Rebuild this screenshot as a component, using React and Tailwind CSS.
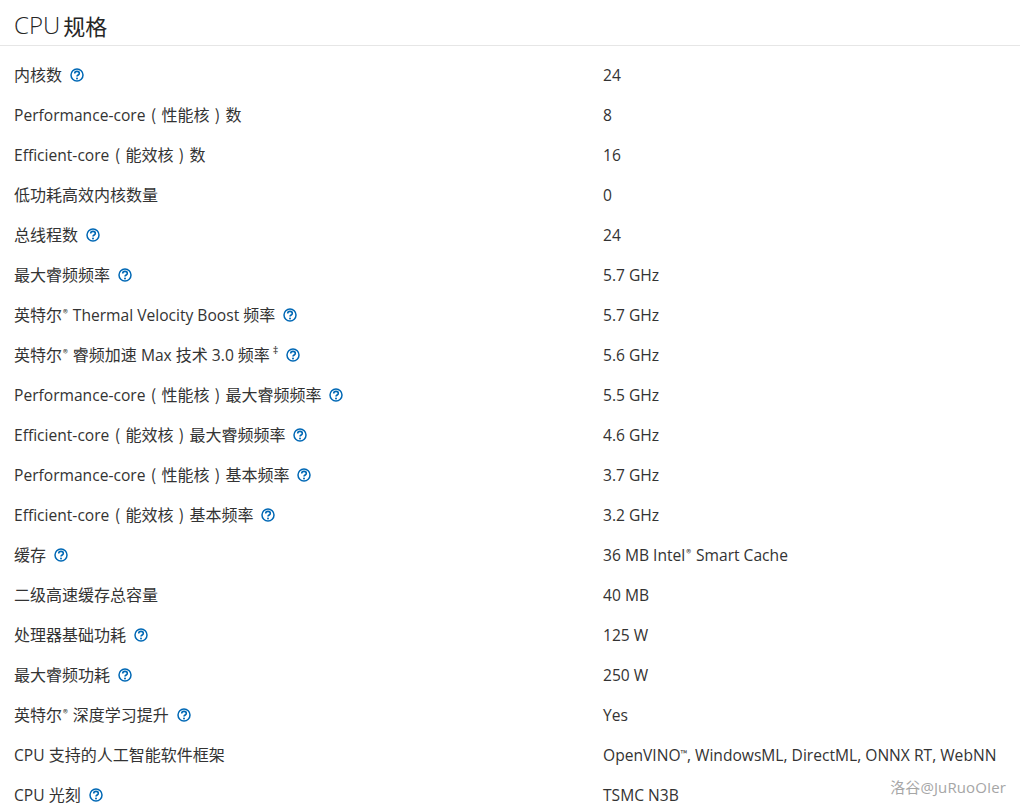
const ROWS = [
  { label: "内核数", value: "24", help: true },
  { label: "Performance-core（性能核）数", value: "8" },
  { label: "Efficient-core（能效核）数", value: "16" },
  { label: "低功耗高效内核数量", value: "0" },
  { label: "总线程数", value: "24", help: true },
  { label: "最大睿频频率", value: "5.7 GHz", help: true },
  { label: "英特尔® Thermal Velocity Boost 频率", value: "5.7 GHz", help: true },
  { label: "英特尔® 睿频加速 Max 技术 3.0 频率", value: "5.6 GHz", help: true, dagger: true },
  { label: "Performance-core（性能核）最大睿频频率", value: "5.5 GHz", help: true },
  { label: "Efficient-core（能效核）最大睿频频率", value: "4.6 GHz", help: true },
  { label: "Performance-core（性能核）基本频率", value: "3.7 GHz", help: true },
  { label: "Efficient-core（能效核）基本频率", value: "3.2 GHz", help: true },
  { label: "缓存", value: "36 MB Intel® Smart Cache", help: true },
  { label: "二级高速缓存总容量", value: "40 MB" },
  { label: "处理器基础功耗", value: "125 W", help: true },
  { label: "最大睿频功耗", value: "250 W", help: true },
  { label: "英特尔® 深度学习提升", value: "Yes", help: true },
  { label: "CPU 支持的人工智能软件框架", value: "OpenVINO™, WindowsML, DirectML, ONNX RT, WebNN" },
  { label: "CPU 光刻", value: "TSMC N3B", help: true },
]

// latin runs are a touch smaller than the CJK, parens sit centred in a full-width box
function Rich({ text }) {
  return text.split(/([\u4e00-\u9fff]+|[（）®™])/).map((part, i) => {
    if (!part) return null
    if (part === "（") return <span key={i} className="inline-block w-4 text-center leading-none">(</span>
    if (part === "）") return <span key={i} className="inline-block w-4 text-center leading-none">)</span>
    if (part === "®") {
      return <span key={i} className="relative top-[-4px] mx-[1px] text-[10px] leading-none">{part}</span>
    }
    if (part === "™") {
      return <span key={i} className="relative top-[-4px] text-[9px] leading-none">{part}</span>
    }
    if (/[\u4e00-\u9fff]/.test(part)) return part
    return <span key={i} className="font-['Open_Sans'] text-[15.6px] leading-none">{part}</span>
  })
}

function HelpIcon() {
  return (
    <svg width="14" height="14" viewBox="0 0 14 14" fill="none" className="ml-2 mt-[2px] shrink-0">
      <circle cx="7" cy="7" r="6" stroke="#0068b5" strokeWidth="1.5" />
      <path d="M4.7 5.6c0-1.4 1.1-2.2 2.3-2.2s2.3.8 2.3 2c0 1.6-2.3 1.6-2.3 3.2" stroke="#0068b5" strokeWidth="1.6" />
      <circle cx="7" cy="10.5" r="1" fill="#0068b5" />
    </svg>
  )
}

export default function App() {
  return (
    <div className="relative h-[811px] w-[1020px] overflow-hidden bg-white font-['Noto_Sans_CJK_SC',sans-serif] text-[#333333]">
      <div className="flex h-[46px] items-start border-b border-[#e6e6e6] pl-[14px] pt-[7px] text-[22px] leading-[36px] text-[#262626]">
        <span className="font-['Open_Sans'] text-[24px] font-light">CPU</span>
        <span className="ml-[3px]">规格</span>
      </div>
      <div className="pt-[8px]">
        {ROWS.map((r) => (
          <div key={r.label} className="flex h-10 items-center pl-[14px] text-[16px] leading-6">
            <div className="flex w-[589px] items-center">
              <span><Rich text={r.label} /></span>
              {r.dagger && <span className="relative top-[-4px] ml-[3px] font-['Open_Sans'] text-[11px]">‡</span>}
              {r.help && <HelpIcon />}
            </div>
            <div><Rich text={r.value} /></div>
          </div>
        ))}
      </div>
      <div className="absolute right-[14px] top-[778px] font-['Open_Sans','Noto_Sans_CJK_SC',sans-serif] text-[15px] leading-[18px] tracking-[0.1px] text-[#a6a6a6]">
        洛谷@JuRuoOIer
      </div>
    </div>
  )
}
